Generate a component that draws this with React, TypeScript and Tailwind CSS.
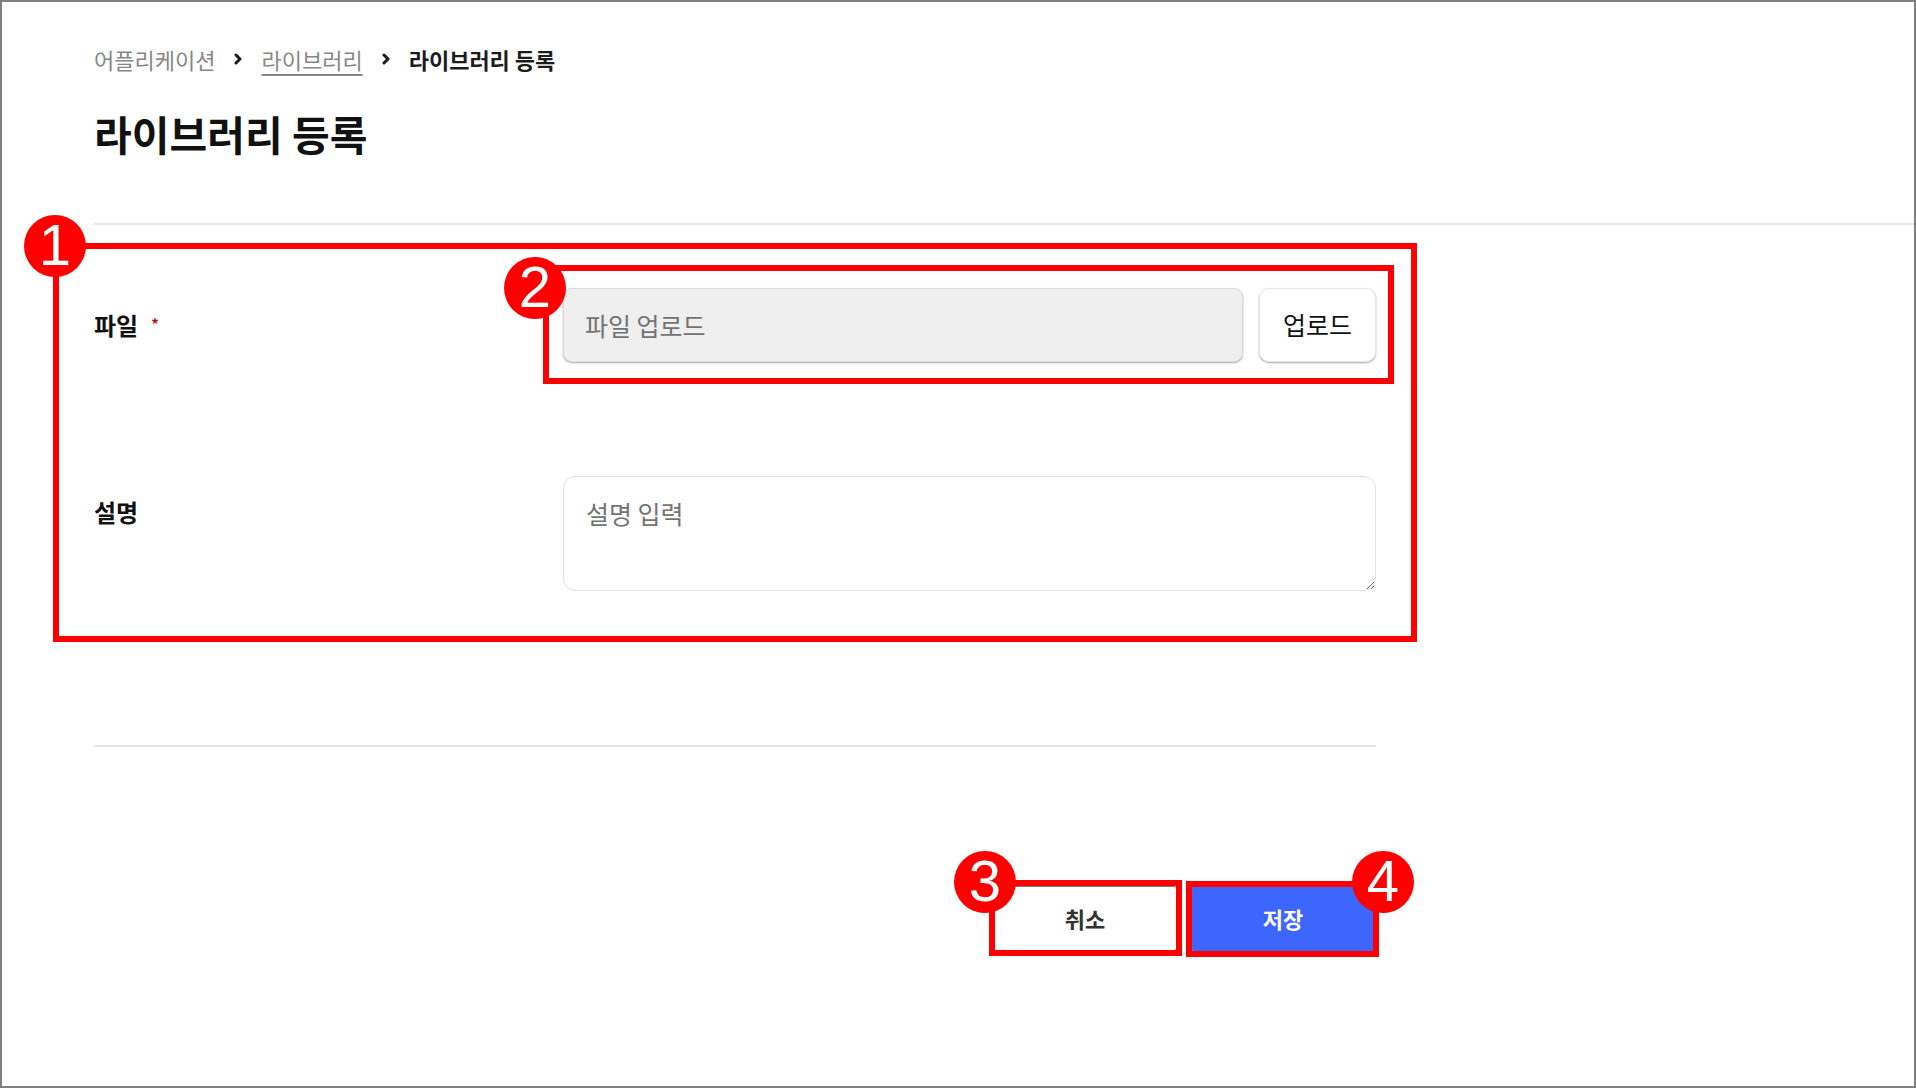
import React from 'react';

const Chevron: React.FC = () => (
  <svg width="10" height="12" viewBox="0 0 10 12" className="mx-[18px] shrink-0">
    <path d="M3 2l4 4-4 4" fill="none" stroke="#1a1a1a" strokeWidth="3" strokeLinecap="round" strokeLinejoin="round" />
  </svg>
);

const Marker: React.FC<{ n: number; className: string }> = ({ n, className }) => (
  <div
    className={`absolute z-20 flex h-[62px] w-[62px] items-center justify-center rounded-full bg-[#ff0000] font-['Liberation_Sans',Arial,sans-serif] text-[58px] leading-none text-white ${className}`}
  >
    <span className="-mt-[2px]">{n}</span>
  </div>
);

const App: React.FC = () => {
  return (
    <div className="relative h-screen w-full overflow-hidden border-2 border-[#7f7f7f] bg-white font-['Noto_Sans_CJK_KR','Noto_Sans',sans-serif] text-[#111]">
      <div className="pl-[92px] pt-[42px]">
        <nav className="flex h-[30px] items-center text-[22px] leading-[30px]">
          <span className="text-[#878787]">어플리케이션</span>
          <Chevron />
          <a href="#" className="text-[#878787] underline decoration-[1.5px] underline-offset-[5px]">
            라이브러리
          </a>
          <Chevron />
          <span className="font-semibold text-[#1c1c1c]">라이브러리 등록</span>
        </nav>
        <h1 className="mt-[35px] text-[41px] font-bold leading-[48px]">라이브러리 등록</h1>
      </div>

      <div className="ml-[92px] mt-[66px] h-[2px] bg-[#e5e8ee]" />

      <form className="ml-[92px] w-[1282px]" onSubmit={(e) => e.preventDefault()}>
        <div className="mt-[63px] flex items-center">
          <label className="flex w-[469px] items-start text-[24px] font-bold leading-[34px]">
            파일
            <span className="ml-[13px] mt-[8px] text-[15px] leading-none text-[#a81818]">*</span>
          </label>
          <div className="flex flex-1 gap-4">
            <input
              type="text"
              readOnly
              placeholder="파일 업로드"
              className="h-[74px] flex-1 rounded-[9px] border border-[#dcdcdc] bg-[#efefef] px-[21px] text-[25px] shadow-[0_1px_2px_rgba(0,0,0,0.35)] outline-none placeholder:text-[#737373]"
            />
            <button
              type="button"
              className="h-[74px] w-[117px] rounded-[10px] border border-[#e8e8e8] bg-white text-[25px] text-[#111] shadow-[0_1px_2px_rgba(0,0,0,0.35)]"
            >
              업로드
            </button>
          </div>
        </div>

        <div className="mt-[114px] flex">
          <label className="w-[469px] pt-[19px] text-[24px] font-bold leading-[34px]">설명</label>
          <textarea
            placeholder="설명 입력"
            className="h-[115px] flex-1 rounded-[12px] border border-[#e0e0e0] bg-white px-[22px] pt-[19px] text-[25px] leading-[34px] outline-none placeholder:text-[#737373]"
          />
        </div>

        <div className="mt-[154px] h-[2px] bg-[#e2e5ea]" />

        <div className="mt-[139px] flex justify-end gap-3">
          <button
            type="button"
            className="h-[65px] w-[186px] rounded-[4px] border border-[#777] bg-white text-[22px] font-semibold text-[#333]"
          >
            취소
          </button>
          <button
            type="submit"
            className="h-[65px] w-[186px] rounded-[4px] bg-[#3d66ff] text-[22px] font-semibold text-white"
          >
            저장
          </button>
        </div>
      </form>

      {/* annotation overlays */}
      <div className="absolute left-[51px] top-[241px] z-10 h-[399px] w-[1364px] border-[6px] border-[#ff0000]" />
      <div className="absolute left-[541px] top-[263px] z-10 h-[119px] w-[851px] border-[6px] border-[#ff0000]" />
      <div className="absolute left-[987px] top-[878px] z-10 h-[76px] w-[193px] border-[6px] border-[#ff0000]" />
      <div className="absolute left-[1184px] top-[879px] z-10 h-[76px] w-[193px] border-[6px] border-[#ff0000]" />
      <Marker n={1} className="left-[22px] top-[213px]" />
      <Marker n={2} className="left-[502px] top-[255px]" />
      <Marker n={3} className="left-[952px] top-[849px]" />
      <Marker n={4} className="left-[1350px] top-[849px]" />
    </div>
  );
};

export default App;
